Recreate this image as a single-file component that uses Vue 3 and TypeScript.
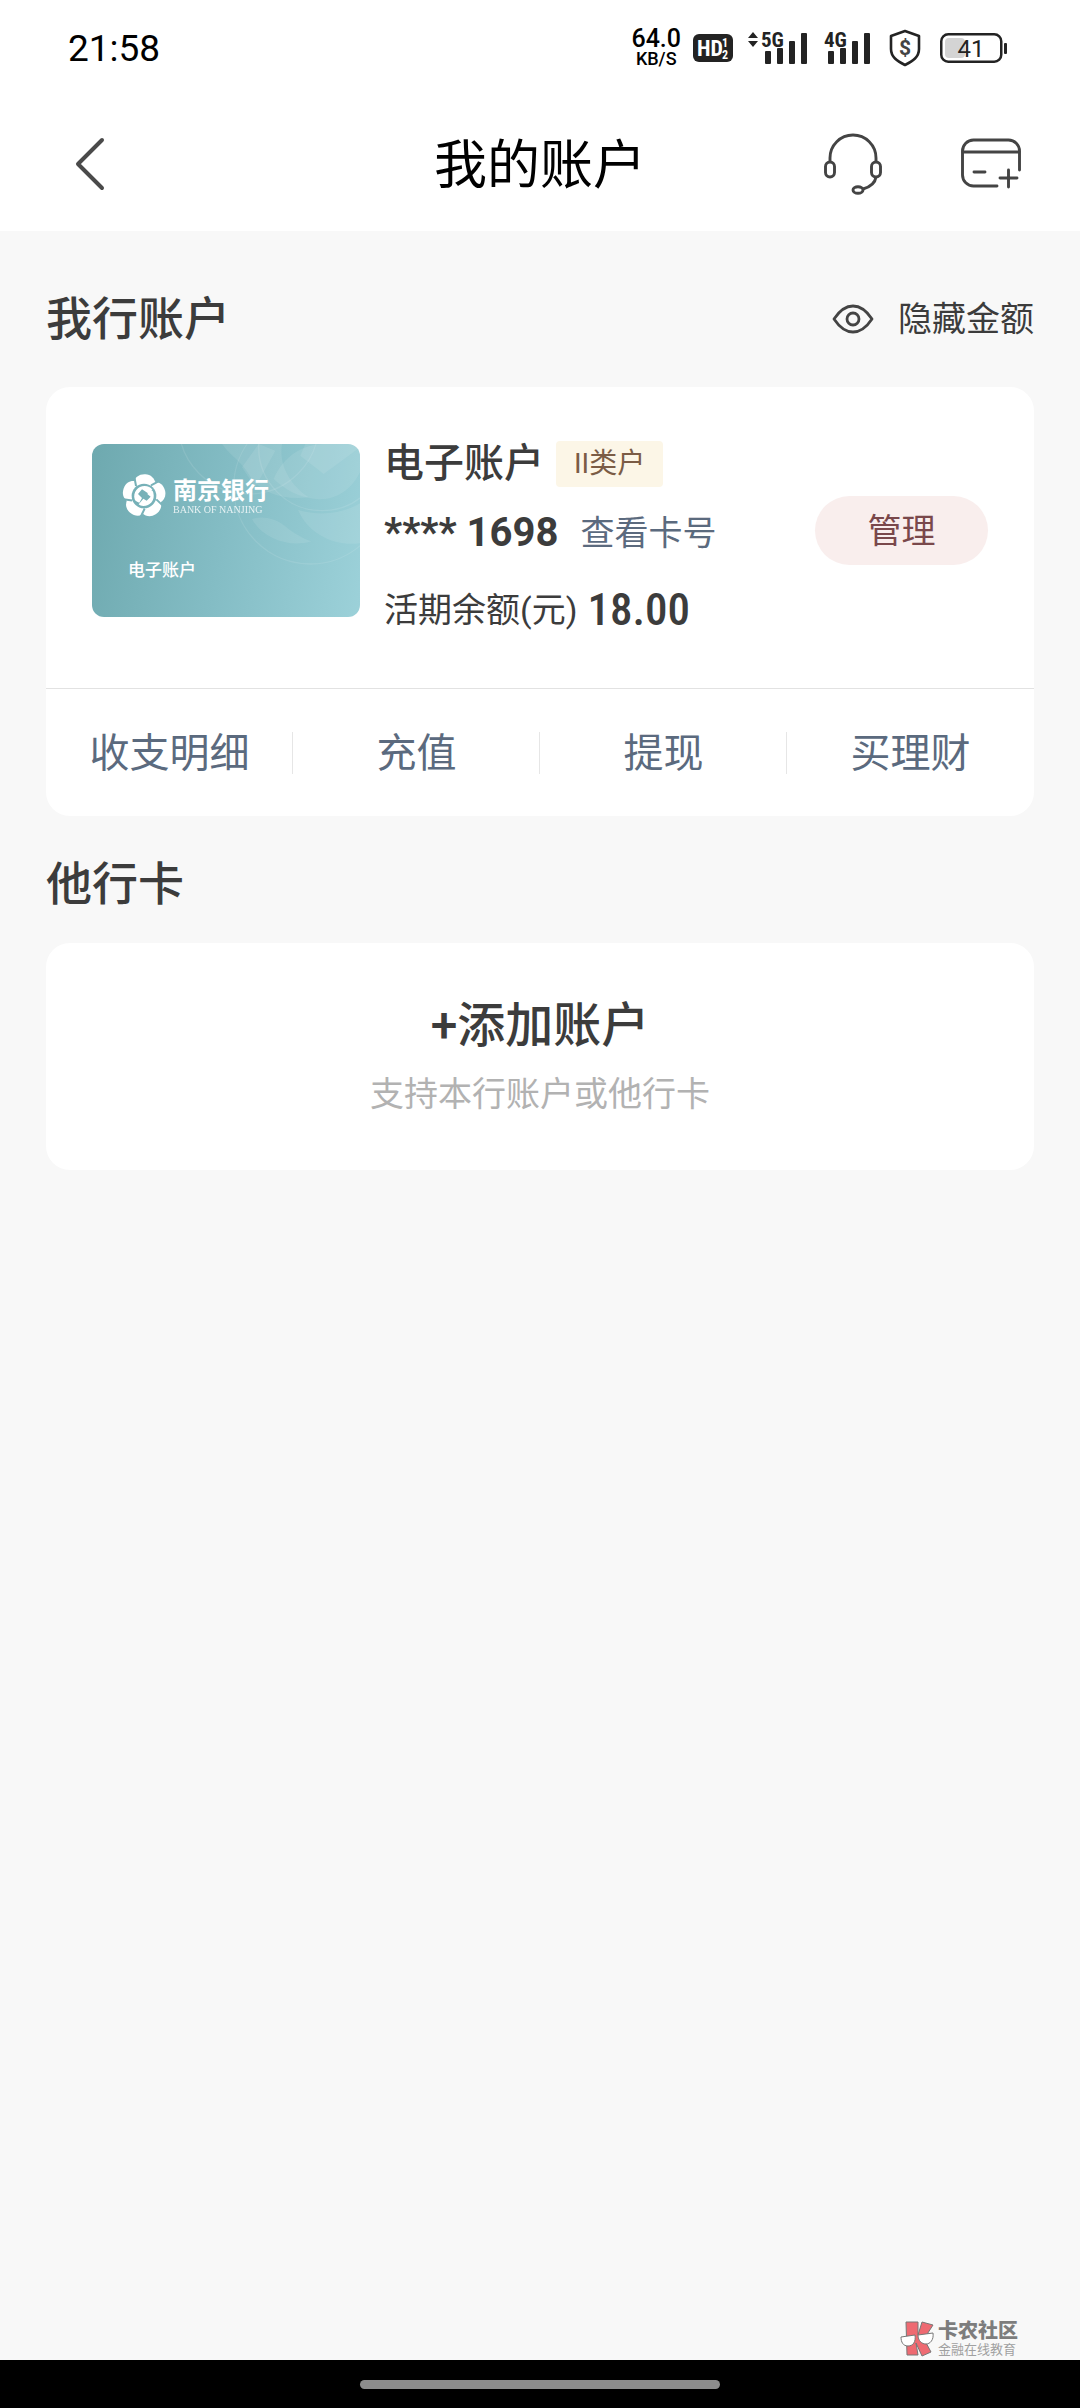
<script setup lang="ts">
import { ref, computed } from 'vue'

interface Account {
  name: string
  level: string
  tail: string
  balance: string
}

const account: Account = {
  name: '电子账户',
  level: 'II类户',
  tail: '1698',
  balance: '18.00',
}

const actions: string[] = ['收支明细', '充值', '提现', '买理财']
const petals: number[] = [0, 72, 144, 216, 288]

const hidden = ref(false)
const balanceText = computed(() => (hidden.value ? '****' : account.balance))
const toggleText = computed(() => (hidden.value ? '显示金额' : '隐藏金额'))
</script>

<template>
  <div class="page">
    <div class="status">
      <span class="clock">21:58</span>
      <div class="status-icons">
        <div class="speed"><span class="speed-num">64.0</span><span class="speed-unit">KB/S</span></div>
        <svg class="hd" width="40" height="28" viewBox="0 0 40 28" aria-hidden="true">
          <rect width="40" height="28" rx="6" fill="#232323" />
          <text x="4" y="22" font-size="22" font-weight="700" fill="#fff">HD</text>
          <text x="29" y="13" font-size="12" font-weight="700" fill="#fff">1</text>
          <text x="29" y="25" font-size="12" font-weight="700" fill="#fff">2</text>
        </svg>
        <svg class="net5" width="61" height="34" viewBox="0 0 61 34" aria-hidden="true">
          <path d="M6 1l5 6H1zM6 16l5-6H1z" fill="#232323" />
          <text x="14" y="16" font-size="21" font-weight="700" fill="#232323">5G</text>
          <g fill="#232323">
            <rect x="18" y="20" width="6" height="13" rx="1" />
            <rect x="30" y="17" width="6" height="16" rx="1" />
            <rect x="42" y="10" width="6" height="23" rx="1" />
            <rect x="54" y="2" width="6" height="31" rx="1" />
          </g>
        </svg>
        <svg class="net4" width="48" height="34" viewBox="0 0 48 34" aria-hidden="true">
          <text x="0" y="16" font-size="21" font-weight="700" fill="#232323">4G</text>
          <g fill="#232323">
            <rect x="4" y="20" width="6" height="13" rx="1" />
            <rect x="16" y="17" width="6" height="16" rx="1" />
            <rect x="28" y="10" width="6" height="23" rx="1" />
            <rect x="40" y="2" width="6" height="31" rx="1" />
          </g>
        </svg>
        <svg class="shield" width="34" height="38" viewBox="0 0 34 38" aria-hidden="true">
          <path d="M17 2L31 7V20c0 8-6 12-14 16C9 32 3 28 3 20V7Z" fill="none" stroke="#232323" stroke-width="2.600" stroke-linejoin="round" />
          <text x="17" y="26" text-anchor="middle" font-size="21" font-weight="700" fill="#444">$</text>
        </svg>
        <svg class="battery" width="68" height="30" viewBox="0 0 68 30" aria-hidden="true">
          <rect x="5" y="5" width="20" height="20" rx="4" fill="#d4d4d4" />
          <rect x="1.250" y="1.250" width="60" height="27.500" rx="7" fill="none" stroke="#232323" stroke-width="2.500" />
          <rect x="64" y="10" width="3" height="11" rx="1" fill="#232323" />
          <text x="31" y="24" text-anchor="middle" font-size="24" fill="#232323">41</text>
        </svg>
      </div>
    </div>

    <header class="nav">
      <button class="icon-btn back" type="button" aria-label="返回">
        <svg width="32" height="54" viewBox="0 0 32 54"><path d="M28 3L4 27l24 24" fill="none" stroke="#4a4a4a" stroke-width="4" stroke-linejoin="round" stroke-linecap="round" /></svg>
      </button>
      <h1>我的账户</h1>
      <div class="nav-tools">
        <button class="icon-btn" type="button" aria-label="客服">
          <svg width="60" height="62" viewBox="0 0 60 62">
            <g fill="none" stroke="#444" stroke-width="2.900">
              <path d="M7 29V25a23 23 0 0 1 46 0v4" />
              <rect x="2.500" y="29" width="9" height="15" rx="4.500" />
              <rect x="48.500" y="29" width="9" height="15" rx="4.500" />
              <path d="M53 44c-1 7-6 10-13 12" />
              <ellipse cx="35" cy="57" rx="5" ry="3.300" />
            </g>
          </svg>
        </button>
        <button class="icon-btn" type="button" aria-label="添加银行卡">
          <svg width="60" height="52" viewBox="0 0 60 52">
            <g fill="none" stroke="#444" stroke-width="2.900" stroke-linecap="round">
              <path d="M58.500 32V13a11 11 0 0 0-11-11h-35a11 11 0 0 0-11 11v24a11 11 0 0 0 11 11H36" />
              <path d="M2 14h56M13 34h11M39 40h17M47.500 32v17" />
            </g>
          </svg>
        </button>
      </div>
    </header>

    <main>
      <div class="section-head">
        <h2>我行账户</h2>
        <button class="toggle" type="button" @click="hidden = !hidden">
          <svg width="42" height="30" viewBox="0 0 42 30" aria-hidden="true">
            <g fill="none" stroke="#444" stroke-width="2.800">
              <path d="M2 15C8 6 14 2 21 2s13 4 19 13c-6 9-12 13-19 13S8 24 2 15Z" stroke-linejoin="round" />
              <circle cx="21" cy="15" r="6" />
            </g>
          </svg>
          <span>{{ toggleText }}</span>
        </button>
      </div>

      <section class="panel">
        <div class="account">
          <div class="bank-card">
            <svg class="rose" viewBox="0 0 804 519" preserveAspectRatio="xMaxYMin slice" aria-hidden="true">
              <g fill="none" stroke="#fff" stroke-opacity=".1" stroke-width="4">
                <circle cx="655" cy="130" r="230" />
                <circle cx="470" cy="-60" r="210" />
                <circle cx="690" cy="10" r="190" />
              </g>
              <g fill="#fff" fill-opacity=".09">
                <path d="M480 225c35-12 75 0 100 22s60 40 78 45c-60 20-145-5-178-67z" />
                <path d="M618 198c70 20 135 10 186-20v120c-80 10-155-30-186-100z" />
                <path d="M390 0h180c-10 60 20 120 80 160-90 10-150-20-180-70-20-35-50-50-80-90z" />
                <path d="M545 105c30-70 90-105 150-105h109v85c-30 60-80 85-130 80-55-5-90-25-129-60z" />
                <path d="M625 35l70 55 109-80V0H640z" />
                <path d="M500 0l-50 70 40 60 60-110z" />
              </g>
            </svg>
            <div class="bank-brand">
              <svg width="44" height="44" viewBox="-66 -66 132 132" aria-hidden="true">
                <defs>
                  <mask id="flower-cut">
                    <rect x="-66" y="-66" width="132" height="132" fill="#fff" />
                    <circle r="37" fill="#000" />
                    <path v-for="a in petals" :key="a" d="M-24-30L-30-64" :transform="`rotate(${a})`" stroke="#000" stroke-width="6" />
                  </mask>
                </defs>
                <g mask="url(#flower-cut)" fill="#fff">
                  <path v-for="a in petals" :key="a" d="M-32-36C-30-56-14-66 4-65C20-64 32-54 34-38L0-20Z" :transform="`rotate(${a})`" />
                </g>
                <path d="M-28 10C-34-12-18-30 2-30C12-30 20-26 25-19L12-8L-6-20L-18-6L-6 6L-14 20C-21 18-26 15-28 10Z" fill="#fff" />
                <path d="M28-10C34 12 18 30-2 30C-8 30-12 28-16 25L-2 8L8 14L20 2L10-6L18-18C24-18 27-15 28-10Z" fill="#fff" />
              </svg>
              <div class="bank-names">
                <span class="bank-cn">南京银行</span>
                <span class="bank-en">BANK OF NANJING</span>
              </div>
            </div>
            <span class="card-kind">{{ account.name }}</span>
          </div>

          <div class="info">
            <div class="row">
              <strong class="name">{{ account.name }}</strong>
              <span class="tag">{{ account.level }}</span>
            </div>
            <div class="row">
              <span class="number">**** {{ account.tail }}</span>
              <a class="view" href="#">查看卡号</a>
            </div>
            <div class="row balance">
              <span>活期余额(元)</span>
              <span class="amount">{{ balanceText }}</span>
            </div>
          </div>

          <button class="manage" type="button">管理</button>
        </div>

        <nav class="actions">
          <a v-for="item in actions" :key="item" href="#">{{ item }}</a>
        </nav>
      </section>

      <div class="section-head other">
        <h2>他行卡</h2>
      </div>

      <button class="panel add" type="button">
        <span class="add-title">+添加账户</span>
        <span class="add-note">支持本行账户或他行卡</span>
      </button>
    </main>

    <footer class="mark">
      <svg width="34" height="36" viewBox="0 0 34 36" aria-hidden="true">
        <g fill="#ee6a72" stroke="#777" stroke-width="1">
          <path d="M6 1h12v13L22 1l11 3-9 14 7 13-9 4-6-13 2 12H7z" />
        </g>
        <g fill="#fff" stroke="#777" stroke-width="1">
          <path d="M1 16l14-2c1 7-2 11-7 11s-7-4-7-9z" />
          <path d="M18 14l15-2c1 7-3 11-7 11s-8-3-8-9z" />
        </g>
      </svg>
      <div class="mark-text">
        <span class="mark-name">卡农社区</span>
        <span class="mark-sub">金融在线教育</span>
      </div>
    </footer>
    <div class="home-bar"><span></span></div>
  </div>
</template>

<style>
body {
  margin: 0;
  background: #f8f8f8;
}
</style>

<style scoped>
.page {
  display: flex;
  flex-direction: column;
  min-height: 100vh;
  background: #f8f8f8;
  color: #3c3c3c;
  font-family: Roboto, "Noto Sans CJK SC", sans-serif;
}
button {
  margin: 0;
  padding: 0;
  border: 0;
  background: none;
  color: inherit;
  font: inherit;
  cursor: pointer;
}
a {
  color: #5b6a7e;
  text-decoration: none;
}
h1,
h2 {
  margin: 0;
}
svg {
  display: block;
}

.status {
  display: flex;
  align-items: center;
  justify-content: space-between;
  height: 96px;
  padding: 0 72px 0 68px;
  background: #fff;
  color: #000;
}
.clock {
  font-size: 37px;
  font-weight: 400;
}
.status-icons {
  display: flex;
  align-items: center;
}
.status-icons svg {
  overflow: visible;
}
.speed {
  display: flex;
  flex-direction: column;
  align-items: center;
  font-weight: 500;
}
.speed-num {
  font-size: 25px;
  line-height: 22px;
}
.speed-unit {
  font-size: 18px;
  line-height: 18px;
}
.hd,
.net5,
.net4 {
  font-family: "Roboto Condensed", "Liberation Sans Narrow", Roboto, sans-serif;
}
.hd {
  margin-left: 12px;
}
.net5 {
  margin-left: 14px;
}
.net4 {
  margin-left: 16px;
}
.shield {
  margin-left: 16px;
}
.battery {
  margin-left: 18px;
}

.nav {
  display: grid;
  grid-template-columns: 1fr auto 1fr;
  align-items: center;
  height: 135px;
  padding: 0 59px;
  background: #fff;
}
.nav h1 {
  padding-top: 5px;
  color: #000;
  font-size: 53px;
  font-weight: 400;
  line-height: 80px;
}
.back {
  justify-self: start;
  margin-left: 15px;
}
.nav-tools {
  display: flex;
  align-items: center;
  justify-content: flex-end;
  gap: 78px;
}

main {
  flex: 1;
  padding: 0 46px;
}
.section-head {
  display: flex;
  align-items: center;
  justify-content: space-between;
  padding: 58px 0 38px;
}
.section-head.other {
  padding: 38px 0 29px;
}
h2 {
  font-size: 46px;
  font-weight: 500;
  line-height: 60px;
}
.toggle {
  display: flex;
  align-items: center;
  gap: 24px;
  font-size: 34px;
  line-height: 46px;
}

.panel {
  border-radius: 24px;
  background: #fff;
}
.account {
  display: flex;
  align-items: center;
  padding: 54px 46px 55px;
}
.bank-card {
  position: relative;
  box-sizing: border-box;
  flex: none;
  width: 268px;
  height: 173px;
  margin-bottom: 13px;
  padding: 30px;
  overflow: hidden;
  border-radius: 12px;
  background: linear-gradient(100deg, #6ea9af, #84bdc5 50%, #9cd1d9);
  color: #fff;
}
.rose {
  position: absolute;
  inset: 0;
  width: 100%;
  height: 100%;
}
.bank-brand {
  position: relative;
  display: flex;
  align-items: center;
  gap: 7px;
}
.bank-names {
  display: flex;
  flex-direction: column;
  white-space: nowrap;
}
.bank-cn {
  font-size: 24px;
  font-weight: 700;
  line-height: 28px;
}
.bank-en {
  font-family: "Liberation Serif", serif;
  font-size: 10px;
  line-height: 10px;
  opacity: 0.8;
}
.card-kind {
  position: relative;
  display: block;
  margin: 40px 0 0 6px;
  font-size: 17px;
  font-weight: 500;
  line-height: 24px;
}

.info {
  flex: 1;
  padding-left: 24px;
}
.row {
  display: flex;
  align-items: center;
  height: 46px;
  line-height: 46px;
  white-space: nowrap;
}
.row + .row {
  margin-top: 23px;
}
.row.balance {
  margin-top: 31px;
  font-size: 34px;
}
.name {
  font-size: 40px;
  font-weight: 500;
}
.tag {
  margin-left: 12px;
  padding: 0 18px;
  border-radius: 4px;
  background: #fcf6e7;
  color: #7b5c45;
  font-size: 28px;
}
.number {
  font-size: 40px;
  font-weight: 700;
}
.view {
  margin-left: 22px;
  font-size: 34px;
}
.amount {
  margin-left: 10px;
  font-family: "Roboto Condensed", "Liberation Sans Narrow", Roboto, sans-serif;
  font-size: 45px;
  font-weight: 500;
}
.manage {
  flex: none;
  width: 173px;
  height: 69px;
  margin-bottom: 13px;
  padding-bottom: 4px;
  border-radius: 35px;
  background: #f9eeed;
  color: #7a484b;
  font-size: 34px;
}

.actions {
  display: flex;
  align-items: center;
  height: 127px;
  border-top: 1px solid #e2e2e2;
}
.actions a {
  flex: 1;
  height: 42px;
  font-size: 40px;
  line-height: 44px;
  text-align: center;
}
.actions a + a {
  box-shadow: -1px 0 0 #e6e6e6;
}

.add {
  display: flex;
  flex-direction: column;
  align-items: center;
  width: 100%;
  padding: 53px 0;
}
.add-title {
  font-size: 48px;
  font-weight: 500;
  line-height: 60px;
}
.add-note {
  margin-top: 15px;
  color: #b2b2b2;
  font-size: 34px;
  line-height: 46px;
}

.mark {
  display: flex;
  align-items: center;
  justify-content: flex-end;
  gap: 4px;
  padding: 0 62px 2px;
  color: #7d7d7d;
}
.mark-text {
  display: flex;
  flex-direction: column;
}
.mark-name {
  font-size: 20px;
  font-weight: 900;
  line-height: 22px;
}
.mark-sub {
  color: #a0a0a0;
  font-size: 13px;
  line-height: 16px;
}
.home-bar {
  display: flex;
  align-items: center;
  justify-content: center;
  height: 48px;
  background: #000;
}
.home-bar span {
  width: 33.333%;
  height: 9px;
  border-radius: 5px;
  background: #8c8c8c;
}
</style>
